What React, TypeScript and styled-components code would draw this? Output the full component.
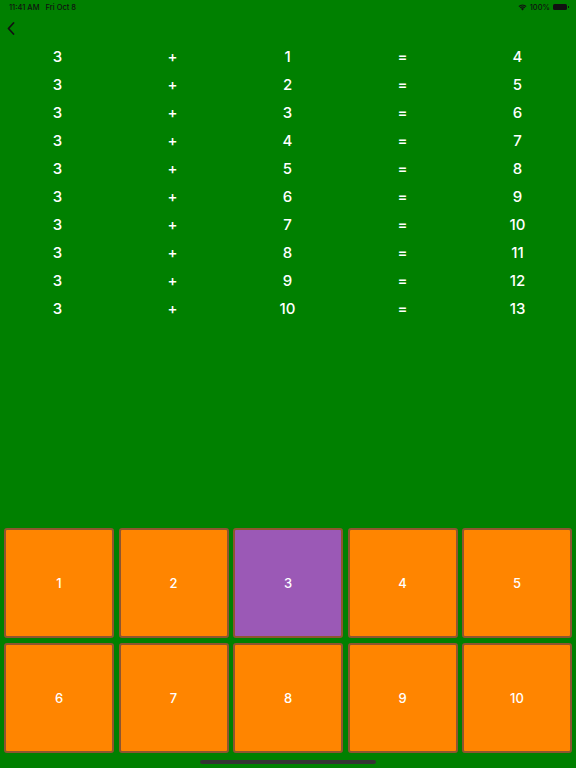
import React from "react";
import styled, { createGlobalStyle } from "styled-components";

const Global = createGlobalStyle`
  html, body { margin: 0; padding: 0; }
  body { background: #008000; font-family: Inter, "Noto Sans", sans-serif; }
  #root { width: 576px; height: 768px; }
`;

const Screen = styled.div`
  width: 576px;
  height: 768px;
  background: #008000;
  display: flex;
  flex-direction: column;
  position: relative;
  overflow: hidden;
`;

const StatusBar = styled.div`
  height: 14px;
  display: flex;
  align-items: center;
  justify-content: space-between;
  padding: 0 9px 0 9px;
  font-size: 7.5px;
  color: #111;
  font-weight: 500;
`;

const StatusLeft = styled.div`
  display: flex;
  gap: 6px;
`;

const StatusRight = styled.div`
  display: flex;
  align-items: center;
  gap: 3px;
`;

const Battery = styled.div`
  width: 14px;
  height: 6px;
  background: #111;
  border-radius: 1.5px;
  position: relative;
  &::after {
    content: "";
    position: absolute;
    right: -2px;
    top: 2px;
    width: 1px;
    height: 2px;
    background: #111;
  }
`;

const NavBar = styled.div`
  height: 28px;
  display: flex;
  align-items: center;
  padding-left: 7px;
`;

const Table = styled.div`
  display: flex;
  flex-direction: column;
  padding-top: 0px;
`;

const Row = styled.div`
  display: grid;
  grid-template-columns: repeat(5, 115px);
  height: 28px;
  align-items: center;
`;

const Cell = styled.div`
  text-align: center;
  color: #fff;
  font-size: 15px;
  font-weight: 500;
`;

const Spacer = styled.div`
  flex: 1;
`;

const Pad = styled.div`
  display: grid;
  grid-template-columns: repeat(5, 110px);
  column-gap: 4.5px;
  row-gap: 5px;
  padding: 0 4px 15px 4px;
`;

const Key = styled.div<{ $active?: boolean }>`
  height: 110px;
  box-sizing: border-box;
  background: ${(p) => (p.$active ? "#9b59b6" : "#ff8500")};
  border: 2px solid #8e5530;
  border-radius: 3px;
  display: flex;
  align-items: center;
  justify-content: center;
  color: #fff;
  font-size: 13px;
  font-weight: 500;
`;

const HomeIndicator = styled.div`
  position: absolute;
  bottom: 4px;
  left: 200px;
  width: 176px;
  height: 4px;
  border-radius: 2px;
  background: #333;
`;

export default function App() {
  const rows = Array.from({ length: 10 }, (_, i) => i + 1);
  return (
    <>
      <Global />
      <Screen>
        <StatusBar>
          <StatusLeft>
            <span>11:41 AM</span>
            <span>Fri Oct 8</span>
          </StatusLeft>
          <StatusRight>
            <svg width="9" height="7" viewBox="0 0 18 14">
              <path d="M9 13 L6 9.5 A4.5 4.5 0 0 1 12 9.5 Z" fill="#111" />
              <path d="M3.5 7 A8 8 0 0 1 14.5 7 L13 8.6 A6 6 0 0 0 5 8.6 Z" fill="#111" />
              <path d="M1 4.2 A11.5 11.5 0 0 1 17 4.2 L15.5 5.8 A9.5 9.5 0 0 0 2.5 5.8 Z" fill="#111" />
            </svg>
            <span>100%</span>
            <Battery />
          </StatusRight>
        </StatusBar>
        <NavBar>
          <svg width="8" height="13" viewBox="0 0 8 13">
            <path d="M6.5 1 L1.5 6.5 L6.5 12" stroke="#111" strokeWidth="1.8" fill="none" strokeLinecap="round" strokeLinejoin="round" />
          </svg>
        </NavBar>
        <Table>
          {rows.map((n) => (
            <Row key={n}>
              <Cell>3</Cell>
              <Cell>+</Cell>
              <Cell>{n}</Cell>
              <Cell>=</Cell>
              <Cell>{3 + n}</Cell>
            </Row>
          ))}
        </Table>
        <Spacer />
        <Pad>
          {rows.map((n) => (
            <Key key={n} $active={n === 3}>
              {n}
            </Key>
          ))}
        </Pad>
        <HomeIndicator />
      </Screen>
    </>
  );
}
